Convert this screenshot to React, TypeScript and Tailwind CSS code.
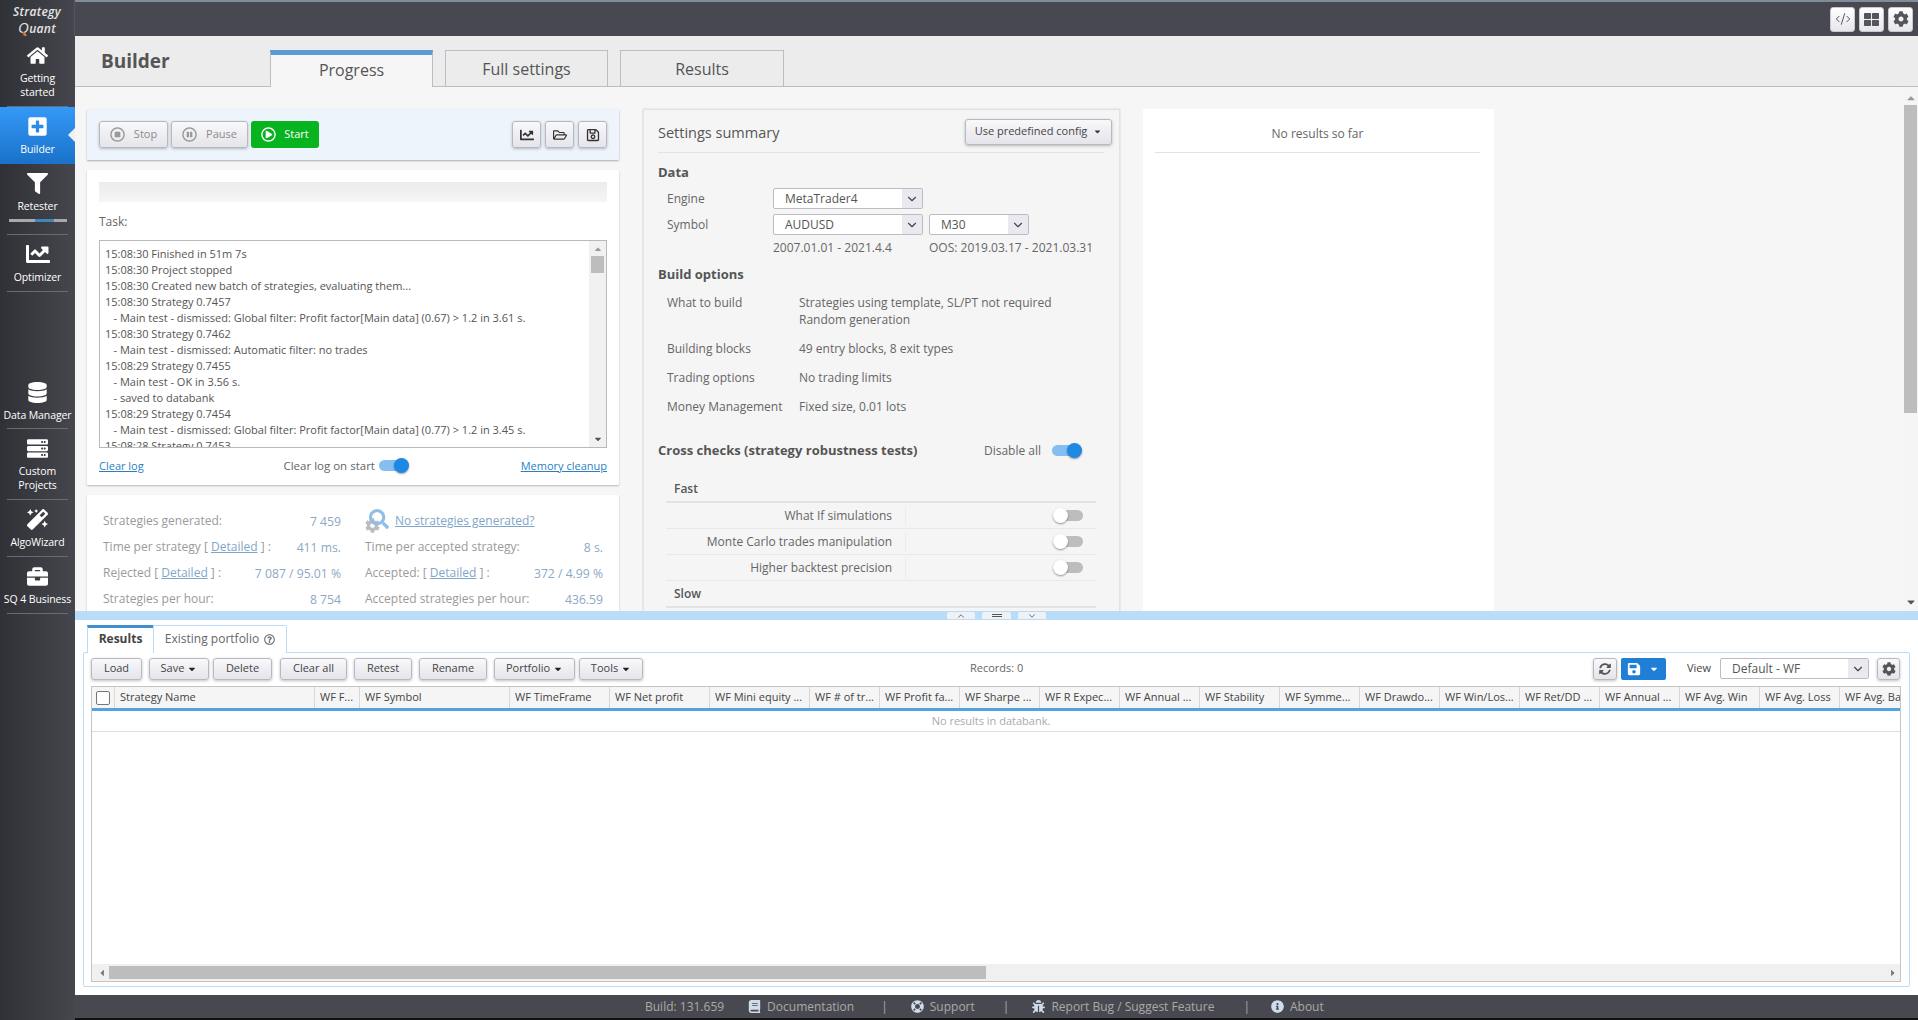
import React from "react";
import {
  FaHome, FaPlusSquare, FaFilter, FaChartLine, FaDatabase, FaServer, FaMagic, FaBriefcase,
  FaCog, FaThLarge, FaRegSave, FaRegFolderOpen, FaSyncAlt, FaBook, FaLifeRing, FaBug,
  FaInfoCircle, FaRegPlayCircle, FaRegStopCircle, FaRegPauseCircle, FaRegQuestionCircle, FaSearch, FaSave,
  FaCaretDown, FaCaretUp, FaCaretLeft, FaCaretRight,
} from "react-icons/fa";
import { ChevronDown, ChevronUp, CodeXml } from "lucide-react";

function NavItem({ icon, label, h, active, sep = true, bar }: { icon: React.ReactNode; label: string[]; h: string; active?: boolean; sep?: boolean; bar?: boolean }) {
  return (
    <div className={`relative flex flex-col items-center text-white text-[10.5px] leading-[14px] ${h} ${active ? "bg-gradient-to-b from-[#3499f7] to-[#1a72c9] pt-[7px]" : "pt-[7px]"}`}>
      <div className="flex h-[24px] items-center justify-center text-[21px]">{icon}</div>
      <div className="mt-[4px] text-center tracking-[-0.1px]">
        {label.map((l) => (
          <div key={l}>{l}</div>
        ))}
      </div>
      {bar && (
        <div className="mt-[6px] flex h-[3px] w-[58px]">
          <div className="w-[26px] bg-[#a9a9ad]" />
          <div className="w-[19px] bg-[#3d87bd]" />
          <div className="w-[13px] bg-[#a9a9ad]" />
        </div>
      )}
      {sep && <div className="absolute bottom-0 left-[7px] right-[7px] h-px bg-[#6a6b72]" />}
      {active && <div className="absolute right-0 top-[21px] h-0 w-0 border-y-[7px] border-r-[7px] border-y-transparent border-r-[#f0f0f0]" />}
    </div>
  );
}

function Sidebar() {
  return (
    <aside className="flex h-full w-[75px] shrink-0 flex-col bg-gradient-to-r from-[#303136] to-[#46474e]">
      <div className="flex h-[36px] flex-col items-center justify-center border-r border-[#55565c] pt-[2px] text-[12px] font-semibold italic tracking-[0.3px] text-[#e4e4e4]">
        <div className="h-[15px] leading-[15px]">Strategy</div>
        <div className="relative h-[16px] leading-[16px]">
          <span className="text-[15px] font-normal">Q</span>uant
          <span className="absolute left-[5px] top-[13px] h-[4px] w-[2px] -rotate-[25deg] bg-[#d9641e]" />
        </div>
      </div>
      <NavItem h="h-[71px]" icon={<FaHome />} label={["Getting", "started"]} />
      <NavItem h="h-[57px]" active sep={false} icon={<FaPlusSquare />} label={["Builder"]} />
      <NavItem h="h-[71px]" bar icon={<FaFilter />} label={["Retester"]} />
      <NavItem h="h-[57px]" icon={<FaChartLine className="text-[24px]" />} label={["Optimizer"]} />
      <div className="h-[81px]" />
      <NavItem h="h-[56px]" icon={<FaDatabase />} label={["Data Manager"]} />
      <NavItem h="h-[71px]" icon={<FaServer />} label={["Custom", "Projects"]} />
      <NavItem h="h-[57px]" icon={<FaMagic />} label={["AlgoWizard"]} />
      <NavItem h="h-[57px]" icon={<FaBriefcase />} label={["SQ 4 Business"]} />
    </aside>
  );
}

function TopIcon({ children }: { children: React.ReactNode }) {
  return (
    <div className="flex h-[25px] w-[25px] items-center justify-center rounded-[3px] border border-[#c8c8cf] bg-gradient-to-b from-white to-[#e6e6ec] text-[15px] text-[#55565c]">
      {children}
    </div>
  );
}

function Btn({ w, h = "h-[27px]", children, className = "" }: { w: string; h?: string; children: React.ReactNode; className?: string }) {
  return (
    <button className={`flex shrink-0 items-center justify-center rounded-[3px] border border-[#b8b8c0] bg-gradient-to-b from-[#f9f9fb] to-[#e4e4ea] shadow-[0_1px_3px_rgba(0,0,0,0.25)] ${w} ${h} ${className}`}>
      {children}
    </button>
  );
}

function Toggle({ on }: { on?: boolean }) {
  return on ? (
    <div className="relative h-[16px] w-[30px] shrink-0">
      <div className="absolute left-0 top-[2px] h-[11px] w-[26px] rounded-full bg-[#85bff2]" />
      <div className="absolute right-0 top-0 h-[15px] w-[15px] rounded-full bg-[#1e88e5] shadow-[0_1px_2px_rgba(0,0,0,0.4)]" />
    </div>
  ) : (
    <div className="relative h-[16px] w-[30px] shrink-0">
      <div className="absolute right-0 top-[2px] h-[11px] w-[26px] rounded-full bg-[#bdbdbd]" />
      <div className="absolute left-0 top-0 h-[15px] w-[15px] rounded-full bg-white shadow-[0_1px_2px_rgba(0,0,0,0.4)]" />
    </div>
  );
}

function Select({ w, value, pad = "pl-[11px]" }: { w: string; value: string; pad?: string }) {
  return (
    <div className={`flex h-[21px] shrink-0 items-center justify-between rounded-[2px] border border-[#bcbcc2] bg-white text-[12px] text-[#555] ${w} ${pad}`}>
      <span>{value}</span>
      <span className="flex h-full w-[20px] items-center justify-center bg-[#e9e9ef] text-[#444]">
        <ChevronDown size={14} strokeWidth={2} />
      </span>
    </div>
  );
}

const LOG = [
  "15:08:30 Finished in 51m 7s",
  "15:08:30 Project stopped",
  "15:08:30 Created new batch of strategies, evaluating them...",
  "15:08:30 Strategy 0.7457",
  "   - Main test - dismissed: Global filter: Profit factor[Main data] (0.67) > 1.2 in 3.61 s.",
  "15:08:30 Strategy 0.7462",
  "   - Main test - dismissed: Automatic filter: no trades",
  "15:08:29 Strategy 0.7455",
  "   - Main test - OK in 3.56 s.",
  "   - saved to databank",
  "15:08:29 Strategy 0.7454",
  "   - Main test - dismissed: Global filter: Profit factor[Main data] (0.77) > 1.2 in 3.45 s.",
  "15:08:28 Strategy 0.7453",
];

function Detailed() {
  return <span className="text-[#7fa6c9] underline">Detailed</span>;
}

function StatRow({ label, value, w = "w-[238px]" }: { label: React.ReactNode; value: string; w?: string }) {
  return (
    <div className={`flex h-[26px] items-center justify-between ${w}`}>
      <span className="-mt-[3px] text-[12px] text-[#9a9a9a]">{label}</span>
      <span className="mt-[1px] text-[12.2px] text-[#8ba8c6]">{value}</span>
    </div>
  );
}

function LeftColumn() {
  return (
    <div className="flex h-[560px] w-[532px] shrink-0 flex-col">
      <div className="flex h-[51px] shrink-0 items-center justify-between rounded-[1px] bg-[#edf4fb] px-[12px] shadow-[0_1px_2px_rgba(0,0,0,0.3)]">
        <div className="flex gap-[3px]">
          <Btn w="w-[69px]" className="gap-[9px] text-[11px] text-[#8a8a8a]">
            <FaRegStopCircle className="text-[15px] text-[#999]" /> Stop
          </Btn>
          <Btn w="w-[77px]" className="gap-[9px] text-[11px] text-[#8a8a8a]">
            <FaRegPauseCircle className="text-[15px] text-[#999]" /> Pause
          </Btn>
          <button className="flex h-[27px] w-[68px] items-center justify-center gap-[8px] rounded-[3px] bg-[#07b31f] text-[11px] text-white">
            <FaRegPlayCircle className="text-[15px]" /> Start
          </button>
        </div>
        <div className="flex gap-[4px] text-[#333]">
          <Btn w="w-[29px]"><FaChartLine className="text-[14px]" /></Btn>
          <Btn w="w-[29px]"><FaRegFolderOpen className="text-[14px]" /></Btn>
          <Btn w="w-[29px]"><FaRegSave className="text-[14px]" /></Btn>
        </div>
      </div>

      <div className="mt-[10px] flex h-[315px] shrink-0 flex-col rounded-[1px] bg-white px-[12px] pt-[12px] shadow-[0_1px_2px_rgba(0,0,0,0.25)]">
        <div className="h-[20px] bg-gradient-to-b from-[#ececec] to-[#f5f5f5]" />
        <div className="mt-[12px] text-[12px] leading-[16px] text-[#666]">Task:</div>
        <div className="mt-[10px] flex h-[208px] overflow-hidden border border-[#b9b9b9]">
          <div className="flex-1 overflow-hidden pl-[5px] pt-[5px] text-[11px] leading-[16px] text-[#555]">
            {LOG.map((l, i) => (
              <div key={i} className="whitespace-pre">{l}</div>
            ))}
          </div>
          <div className="flex w-[17px] shrink-0 flex-col items-center bg-[#f1f1f1] text-[#999]">
            <FaCaretUp className="mt-[3px] text-[10px]" />
            <div className="mt-[2px] h-[17px] w-[13px] bg-[#bdbdbd]" />
            <div className="flex-1" />
            <FaCaretDown className="mb-[3px] text-[10px] text-[#555]" />
          </div>
        </div>
        <div className="relative mt-[10px] flex items-center justify-between text-[11px] leading-[16px]">
          <span className="text-[#2a7fc4] underline">Clear log</span>
          <div className="ml-[28px] flex items-center gap-[4px] text-[#666]">
            <span className="text-[11.5px]">Clear log on start</span> <Toggle on />
          </div>
          <span className="text-[#2a7fc4] underline">Memory cleanup</span>
        </div>
      </div>

      <div className="mt-[10px] flex flex-1 gap-[24px] rounded-[1px] bg-white pl-[16px] pt-[14px] text-[12px] shadow-[0_1px_2px_rgba(0,0,0,0.25)]">
        <div>
          <StatRow label="Strategies generated:" value="7 459" />
          <StatRow label={<>Time per strategy [ <Detailed /> ] :</>} value="411 ms." />
          <StatRow label={<>Rejected [ <Detailed /> ] :</>} value="7 087 / 95.01 %" />
          <StatRow label="Strategies per hour:" value="8 754" />
        </div>
        <div>
          <div className="flex h-[26px] items-center gap-[6px]">
            <div className="relative h-[24px] w-[24px] shrink-0 -mt-[3px]">
              <FaCog className="absolute bottom-0 left-0 text-[15px] text-[#bdbdbd]" />
              <FaSearch className="absolute right-0 top-0 text-[20px] text-[#8fbfe6]" />
            </div>
            <span className="-mt-[3px] text-[#7fa6c9] underline">No strategies generated?</span>
          </div>
          <StatRow w="w-[238px]" label="Time per accepted strategy:" value="8 s." />
          <StatRow w="w-[238px]" label={<>Accepted: [ <Detailed /> ] :</>} value="372 / 4.99 %" />
          <StatRow w="w-[238px]" label="Accepted strategies per hour:" value="436.59" />
        </div>
      </div>
    </div>
  );
}

function Summary({ k, children }: { k: string; children: React.ReactNode }) {
  return (
    <div className="flex leading-[17px]">
      <div className="w-[141px] shrink-0 pl-[9px]">{k}</div>
      <div>{children}</div>
    </div>
  );
}

function CheckRow({ label }: { label: string }) {
  return (
    <div className="flex h-[26px] items-center border-b border-[#e8e8e8]">
      <div className="w-[226px] text-right">{label}</div>
      <div className="ml-[13px] h-[20px] w-px bg-[#ececec]" />
      <div className="ml-[147px]"><Toggle /></div>
    </div>
  );
}

function SettingsPanel() {
  return (
    <div className="ml-[24px] h-[560px] w-[477px] shrink-0 border border-[#e2e2e2] bg-[#f5f5f5] pl-[14px] pr-[15px] text-[12px] text-[#666] shadow-[0_0_2px_rgba(0,0,0,0.15)]">
      <div className="flex h-[43px] items-center justify-between border-b border-[#e3e3e3]">
        <span className="pt-[3px] text-[14.5px] text-[#555]">Settings summary</span>
        <div className="mt-[1px] -mr-[8px] flex h-[26px] w-[147px] items-center justify-center gap-[6px] rounded-[3px] border border-[#b8b8c0] bg-gradient-to-b from-[#f9f9fb] to-[#e4e4ea] text-[11px] text-[#444] shadow-[0_1px_3px_rgba(0,0,0,0.25)]">
          Use predefined config <FaCaretDown className="text-[9px] text-[#333]" />
        </div>
      </div>
      <div className="mt-[11px] text-[13px] font-bold leading-[17px] text-[#555]">Data</div>
      <div className="mt-[7px] flex items-center">
        <div className="w-[115px] pl-[9px]">Engine</div>
        <Select w="w-[150px]" value="MetaTrader4" />
      </div>
      <div className="mt-[5px] flex items-center">
        <div className="w-[115px] pl-[9px]">Symbol</div>
        <Select w="w-[150px]" value="AUDUSD" />
        <div className="ml-[6px]"><Select w="w-[100px]" value="M30" /></div>
      </div>
      <div className="mt-[4px] flex leading-[17px]">
        <div className="ml-[115px] w-[156px]">2007.01.01 - 2021.4.4</div>
        <div>OOS: 2019.03.17 - 2021.03.31</div>
      </div>
      <div className="mt-[10px] text-[13px] font-bold leading-[17px] text-[#555]">Build options</div>
      <div className="mt-[11px] flex flex-col gap-[12px]">
        <Summary k="What to build">
          Strategies using template, SL/PT not required
          <br />
          Random generation
        </Summary>
        <Summary k="Building blocks">49 entry blocks, 8 exit types</Summary>
        <Summary k="Trading options">No trading limits</Summary>
        <Summary k="Money Management">Fixed size, 0.01 lots</Summary>
      </div>
      <div className="mt-[27px] flex h-[17px] items-center">
        <span className="w-[326px] text-[13px] font-bold text-[#555]">Cross checks (strategy robustness tests)</span>
        <span className="w-[68px]">Disable all</span>
        <Toggle on />
      </div>
      <div className="mx-[8px]">
        <div className="mt-[15px] flex h-[29px] items-center border-b-2 border-[#e3e3e3] pl-[8px] pt-[2px] font-semibold text-[#555]">Fast</div>
        <CheckRow label="What If simulations" />
        <CheckRow label="Monte Carlo trades manipulation" />
        <CheckRow label="Higher backtest precision" />
        <div className="flex h-[27px] items-center border-b-2 border-[#e3e3e3] pl-[8px] font-semibold text-[#555]">Slow</div>
      </div>
    </div>
  );
}

const COLS: [string, string][] = [
  ["Strategy Name", "w-[200px]"],
  ["WF F...", "w-[45px]"],
  ["WF Symbol", "w-[150px]"],
  ["WF TimeFrame", "w-[100px]"],
  ["WF Net profit", "w-[100px]"],
  ["WF Mini equity ...", "w-[100px]"],
  ["WF # of tr...", "w-[70px]"],
  ["WF Profit fa...", "w-[80px]"],
  ["WF Sharpe ...", "w-[80px]"],
  ["WF R Expec...", "w-[80px]"],
  ["WF Annual ...", "w-[80px]"],
  ["WF Stability", "w-[80px]"],
  ["WF Symme...", "w-[80px]"],
  ["WF Drawdo...", "w-[80px]"],
  ["WF Win/Los...", "w-[80px]"],
  ["WF Ret/DD ...", "w-[80px]"],
  ["WF Annual ...", "w-[80px]"],
  ["WF Avg. Win", "w-[80px]"],
  ["WF Avg. Loss", "w-[80px]"],
  ["WF Avg. Ba", "w-[80px]"],
];

function Tb({ w, children, caret }: { w: string; children: string; caret?: boolean }) {
  return (
    <Btn w={w} h="h-[22px]" className="gap-[3px] text-[11px] text-[#444]">
      {children}
      {caret && <FaCaretDown className="text-[10px] text-[#222]" />}
    </Btn>
  );
}

function BottomPanel() {
  return (
    <div className="flex min-h-0 flex-1 flex-col bg-white">
      <div className="ml-[12px] flex h-[32px] shrink-0 items-end text-[12px]">
        <div className="relative z-10 -mb-px flex h-[28px] w-[66px] items-center justify-center border-t-[3px] border-l border-[#3f8fd0] border-l-[#bcdcf5] bg-white pb-[3px] font-bold text-[#444]">
          Results
        </div>
        <div className="relative z-10 -mb-px flex h-[28px] w-[134px] items-center justify-center gap-[5px] rounded-tr-[2px] border border-b-0 border-[#bcdcf5] bg-white pb-[1px] text-[#666]">
          Existing portfolio <FaRegQuestionCircle className="text-[11px]" />
        </div>
      </div>
      <div className="mx-[8px] flex h-[335px] shrink-0 flex-col rounded-[2px] border border-[#bcdcf5] pb-[4px] pl-[7px] pr-[8px]">
        <div className="flex h-[33px] shrink-0 items-center pb-[2px] text-[11px] text-[#666]">
          <div className="flex">
            <Tb w="w-[51px]">Load</Tb>
            <div className="ml-[7px]"><Tb w="w-[60px]" caret>Save</Tb></div>
            <div className="ml-[4px]"><Tb w="w-[59px]">Delete</Tb></div>
            <div className="ml-[8px]"><Tb w="w-[67px]">Clear all</Tb></div>
            <div className="ml-[7px]"><Tb w="w-[58px]">Retest</Tb></div>
            <div className="ml-[7px]"><Tb w="w-[68px]">Rename</Tb></div>
            <div className="ml-[7px]"><Tb w="w-[81px]" caret>Portfolio</Tb></div>
            <div className="ml-[4px]"><Tb w="w-[64px]" caret>Tools</Tb></div>
          </div>
          <span className="ml-[327px]">Records: 0</span>
          <div className="ml-auto flex items-center pr-[1px]">
            <Btn w="w-[24px]" h="h-[22px]"><FaSyncAlt className="text-[12px] text-[#555]" /></Btn>
            <div className="ml-[4px] flex h-[22px] w-[45px] items-center justify-center gap-[8px] rounded-[2px] bg-[#1f7fd6] text-white">
              <FaSave className="text-[14px]" />
              <FaCaretDown className="text-[10px]" />
            </div>
            <span className="ml-[21px] text-[#444]">View</span>
            <div className="ml-[9px]"><Select w="w-[149px]" value="Default - WF" /></div>
            <div className="ml-[8px]"><Btn w="w-[23px]" h="h-[22px]"><FaCog className="text-[14px] text-[#555]" /></Btn></div>
          </div>
        </div>
        <div className="flex min-h-0 flex-1 flex-col overflow-hidden border-x border-b border-[#c4c4c4]">
          <div className="flex h-[25px] shrink-0 border-t border-[#c4c4c4] border-b-[3px] border-b-[#4fa5e4] bg-[#f5f5f5] text-[11px] leading-[20px] text-[#444]">
            <div className="flex w-[22px] shrink-0 items-center justify-center">
              <div className="h-[14px] w-[14px] rounded-[2px] border border-[#777] bg-white" />
            </div>
            {COLS.map(([c, w], i) => (
              <div key={i} className={`shrink-0 overflow-hidden whitespace-nowrap border-l border-[#d8d8d8] pl-[5px] ${w}`}>
                {c}
              </div>
            ))}
          </div>
          <div className="flex h-[21px] shrink-0 items-center justify-center border-b border-[#dedede] pr-[10px] text-[11px] text-[#aaa]">
            No results in databank.
          </div>
          <div className="flex-1" />
          <div className="flex h-[17px] shrink-0 items-center bg-[#f0f0f0] text-[#777]">
            <FaCaretLeft className="ml-[3px] w-[14px] text-[10px]" />
            <div className="h-[13px] w-[877px] bg-[#bdbdbd]" />
            <div className="flex-1" />
            <FaCaretRight className="mr-[2px] text-[10px]" />
          </div>
        </div>
      </div>
    </div>
  );
}

function FooterItem({ icon, children }: { icon: React.ReactNode; children: string }) {
  return (
    <span className="flex items-center gap-[6px]">
      <span className="text-[13px] text-[#cfdcea]">{icon}</span>
      {children}
    </span>
  );
}

export default function App() {
  return (
    <div className="flex h-screen w-screen overflow-hidden bg-white font-['Open_Sans',sans-serif]">
      <Sidebar />
      <main className="flex min-w-0 flex-1 flex-col">
        <header className="flex h-[36px] shrink-0 items-center justify-end gap-[4px] border-t-2 border-[#7f8d99] bg-[#484950] pr-[5px]">
          <TopIcon><CodeXml size={16} strokeWidth={1.5} /></TopIcon>
          <TopIcon><FaThLarge /></TopIcon>
          <TopIcon><FaCog className="text-[16px]" /></TopIcon>
        </header>
        <div className="flex h-[51px] shrink-0 items-end border-b border-[#bdbdc2] bg-[#ececec]">
          <div className="w-[195px] self-center pl-[26px] pt-[1px] text-[19px] font-bold text-[#555]">Builder</div>
          <div className="-mb-px flex h-[37px] w-[163px] items-center justify-center border-x border-[#bdbdc2] border-t-[5px] border-t-[#5b9bd5] bg-[#f6f6f6] pb-[3px] text-[16px] text-[#555]">Progress</div>
          <div className="ml-[12px] flex h-[36px] w-[163px] items-center justify-center border-x border-t border-[#bdbdc2] pt-[1px] text-[16px] text-[#555]">Full settings</div>
          <div className="ml-[12px] flex h-[36px] w-[164px] items-center justify-center border-x border-t border-[#bdbdc2] pt-[1px] text-[16px] text-[#555]">Results</div>
        </div>
        <div className="flex h-[524px] shrink-0 overflow-hidden bg-[#f6f6f6]">
          <div className="flex min-w-0 flex-1 overflow-hidden pl-[12px] pt-[22px]">
            <LeftColumn />
            <SettingsPanel />
            <div className="ml-[23px] h-[560px] w-[351px] shrink-0 bg-white px-[12px] text-[12px] text-[#666]">
              <div className="flex h-[44px] w-[325px] items-center justify-center border-b border-[#e3e3e3] pt-[6px]">No results so far</div>
            </div>
          </div>
          <div className="flex w-[15px] shrink-0 flex-col items-center bg-[#f5f5f5] text-[#999]">
            <FaCaretUp className="mt-[5px] text-[12px]" />
            <div className="mt-[1px] h-[308px] w-[13px] bg-[#bdbdbd]" />
            <div className="flex-1" />
            <FaCaretDown className="mb-[3px] text-[12px] text-[#555]" />
          </div>
        </div>
        <div className="flex h-[9px] shrink-0 items-start justify-center gap-[7px] bg-[#b9dcf8] pt-[1px] text-[#555]">
          <div className="flex h-[7px] w-[28px] items-center justify-center rounded-t-[2px] bg-[#eef2f5]"><ChevronUp size={10} /></div>
          <div className="flex h-[7px] w-[29px] flex-col items-center justify-center gap-[1px] rounded-t-[2px] bg-[#eef2f5]">
            <div className="h-px w-[10px] bg-[#555]" />
            <div className="h-px w-[10px] bg-[#555]" />
          </div>
          <div className="flex h-[7px] w-[28px] items-center justify-center rounded-t-[2px] bg-[#eef2f5]"><ChevronDown size={10} /></div>
        </div>
        <BottomPanel />
        <footer className="flex h-[25px] shrink-0 items-center border-b-2 border-[#111] bg-[#484950] pl-[570px] text-[12px] text-[#a9a9a9]">
          <span>Build: 131.659</span>
          <span className="ml-[24px]"><FooterItem icon={<FaBook />}>Documentation</FooterItem></span>
          <span className="ml-[27px] mr-[23px]">|</span>
          <FooterItem icon={<FaLifeRing />}>Support</FooterItem>
          <span className="ml-[28px] mr-[23px]">|</span>
          <FooterItem icon={<FaBug />}>Report Bug / Suggest Feature</FooterItem>
          <span className="ml-[29px] mr-[21px]">|</span>
          <FooterItem icon={<FaInfoCircle />}>About</FooterItem>
        </footer>
      </main>
    </div>
  );
}
